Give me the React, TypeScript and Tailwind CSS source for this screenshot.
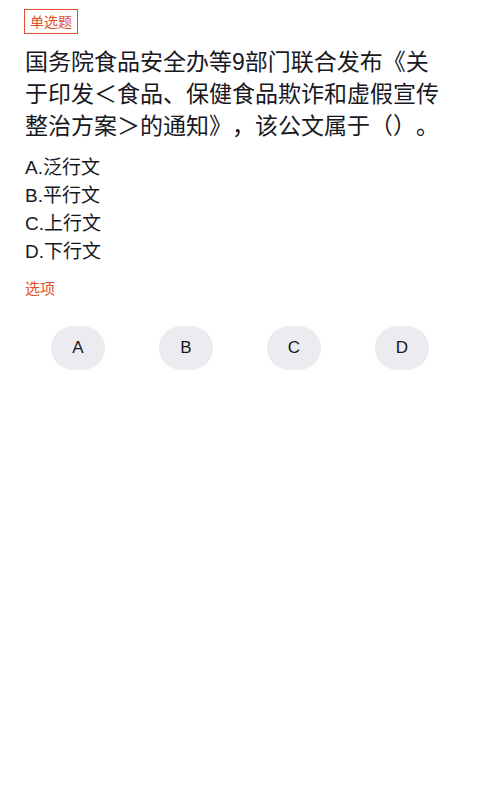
import React from "react";

const FONT = { fontFamily: '"Liberation Sans", "Noto Sans CJK SC", sans-serif' };

const OPTIONS = [
  { key: "A", text: "泛行文" },
  { key: "B", text: "平行文" },
  { key: "C", text: "上行文" },
  { key: "D", text: "下行文" },
];

export default function App() {
  return (
    <div className="min-h-screen w-[480px] bg-white [text-spacing-trim:space-all]" style={FONT}>
      <div className="px-[24px] pt-[9px]">
        <div className="flex h-[25px] w-fit items-center border-[1.5px] border-[#e0502f] px-[5px] text-[14px] leading-none text-[#e0502f]">
          单选题
        </div>

        <div className="mt-[12px] w-[421px] pl-[1px] text-[23px] leading-[32px] text-[#18181f]">
          国务院食品安全办等9部门联合发布《关于印发＜食品、保健食品欺诈和虚假宣传整治方案＞的通知》，该公文属于（）。
        </div>

        <div className="mt-[12px] flex flex-col pl-[1px] text-[19px] leading-[28px] text-[#18181f]">
          {OPTIONS.map((o) => (
            <div key={o.key}>
              {o.key}.{o.text}
            </div>
          ))}
        </div>

        <div className="mt-[13px] pl-[1px] text-[15px] leading-[20px] text-[#e0502f]">选项</div>

        <div className="mt-[27px] grid grid-cols-4">
          {OPTIONS.map((o) => (
            <div key={o.key} className="flex justify-center">
              <button
                type="button"
                className="flex h-[44px] w-[54px] items-center justify-center rounded-full bg-[#ececf0] text-[17px] text-[#18181f]"
              >
                {o.key}
              </button>
            </div>
          ))}
        </div>
      </div>
    </div>
  );
}
